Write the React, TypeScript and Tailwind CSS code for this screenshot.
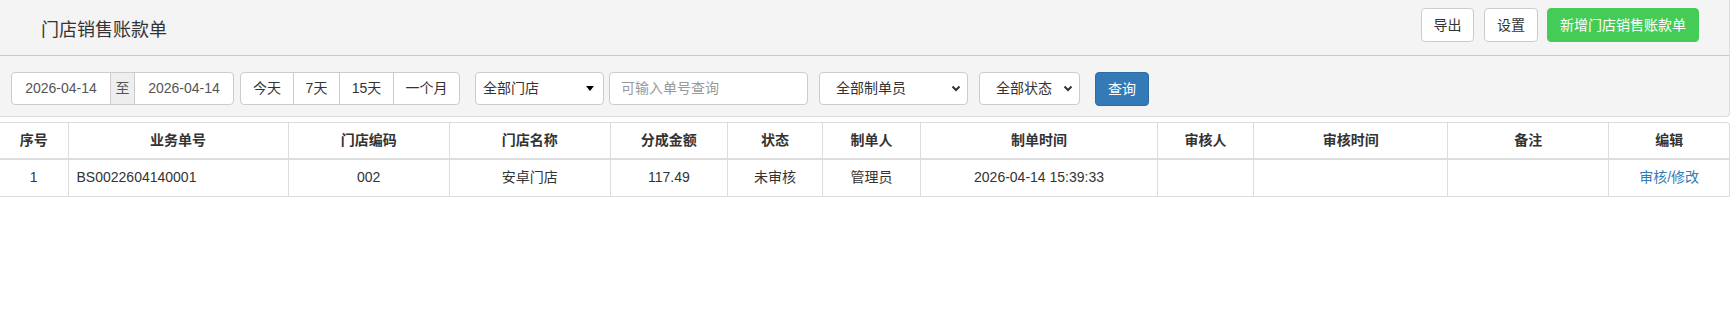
import React from "react";

const FONT = { fontFamily: '"Liberation Sans", Arial, "Noto Sans CJK SC", sans-serif' };

function Chevron() {
  return (
    <svg width="10" height="7" viewBox="0 0 10 7" className="shrink-0">
      <polyline points="1.5,1.5 5,5 8.5,1.5" fill="none" stroke="#333" strokeWidth="2" />
    </svg>
  );
}

const cols = [68, 220, 161, 161, 117, 95, 98, 237, 96, 194, 161, 120];
const heads = ["序号", "业务单号", "门店编码", "门店名称", "分成金额", "状态", "制单人", "制单时间", "审核人", "审核时间", "备注", "编辑"];

export default function App() {
  return (
    <div className="w-[1733px] h-[314px] bg-white text-[14px] text-[#333] overflow-hidden" style={FONT}>
      {/* top panel */}
      <div className="w-[1730px] bg-[#f4f4f4] border-r border-b border-[#dcdcdc] rounded-br-[4px]">
        <div className="h-[56px] border-b border-[#c8c8c8] flex items-start justify-between pl-[41px] pr-[30px]">
          <div className="mt-[19px] text-[18px] leading-[22px] text-[#333]">门店销售账款单</div>
          <div className="flex items-center mt-[8px]">
            <button className="h-[34px] w-[53px] bg-white border border-[#ccc] rounded-[4px] text-[14px] text-[#333]">导出</button>
            <button className="h-[34px] w-[54px] ml-[10px] bg-white border border-[#ccc] rounded-[4px] text-[14px] text-[#333]">设置</button>
            <button className="h-[34px] w-[152px] ml-[9px] bg-[#45cc56] border border-[#45cc56] rounded-[4px] text-[14px] text-white">新增门店销售账款单</button>
          </div>
        </div>
        <div className="h-[60px] flex items-start pt-[16px] pl-[11px]">
          {/* date range */}
          <div className="flex h-[33px] w-[223px] border border-[#ccc] rounded-[4px] bg-white overflow-hidden text-[#555]">
            <div className="w-[98px] flex items-center justify-center">2026-04-14</div>
            <div className="w-[25px] flex items-center justify-center bg-[#eee] border-l border-r border-[#ccc]">至</div>
            <div className="flex-1 flex items-center justify-center">2026-04-14</div>
          </div>
          {/* quick range */}
          <div className="ml-[6px] flex h-[33px] border border-[#ccc] rounded-[4px] bg-white overflow-hidden text-[#333]">
            <div className="w-[52px] flex items-center justify-center">今天</div>
            <div className="w-[46px] flex items-center justify-center border-l border-[#ccc]">7天</div>
            <div className="w-[54px] flex items-center justify-center border-l border-[#ccc]">15天</div>
            <div className="w-[66px] flex items-center justify-center border-l border-[#ccc]">一个月</div>
          </div>
          {/* store select */}
          <div className="ml-[15px] w-[129px] h-[33px] border border-[#ccc] rounded-[4px] bg-white flex items-center justify-between pl-[7px] pr-[9px] text-[#333]">
            <span>全部门店</span>
            <span className="w-0 h-0 border-l-[4px] border-r-[4px] border-t-[5px] border-l-transparent border-r-transparent border-t-black" />
          </div>
          {/* input */}
          <div className="ml-[5px] w-[199px] h-[33px] border border-[#ccc] rounded-[4px] bg-white flex items-center pl-[11px] text-[#999]">
            可输入单号查询
          </div>
          {/* maker select */}
          <div className="ml-[11px] w-[149px] h-[33px] border border-[#ccc] rounded-[4px] bg-white flex items-center justify-between pl-[16px] pr-[6px] text-[#333]">
            <span>全部制单员</span>
            <Chevron />
          </div>
          {/* status select */}
          <div className="ml-[11px] w-[101px] h-[33px] border border-[#ccc] rounded-[4px] bg-white flex items-center justify-between pl-[16px] pr-[6px] text-[#333]">
            <span>全部状态</span>
            <Chevron />
          </div>
          <button className="ml-[15px] w-[54px] h-[34px] bg-[#337ab7] border border-[#2e6da4] rounded-[4px] text-white text-[14px]">查询</button>
        </div>
      </div>

      {/* table */}
      <div className="mt-[5px] w-[1730px] border-t border-r border-[#ddd] rounded-tr-[4px]">
        <table className="w-full border-collapse table-fixed">
          <colgroup>
            {cols.map((w, i) => (
              <col key={i} style={{ width: w }} />
            ))}
          </colgroup>
          <thead>
            <tr>
              {heads.map((h, i) => (
                <th
                  key={h}
                  className={`h-[36px] p-0 text-center font-bold text-[14px] text-[#333] border-b-2 border-[#ddd] ${i === 0 ? "" : "border-l"}`}
                >
                  {h}
                </th>
              ))}
            </tr>
          </thead>
          <tbody>
            <tr className="text-[#333]">
              <td className="h-[37px] p-0 text-center border-b border-[#ddd]">1</td>
              <td className="p-0 pl-[8px] text-left border-b border-l border-[#ddd]">BS0022604140001</td>
              <td className="p-0 text-center border-b border-l border-[#ddd]">002</td>
              <td className="p-0 text-center border-b border-l border-[#ddd]">安卓门店</td>
              <td className="p-0 text-center border-b border-l border-[#ddd]">117.49</td>
              <td className="p-0 text-center border-b border-l border-[#ddd]">未审核</td>
              <td className="p-0 text-center border-b border-l border-[#ddd]">管理员</td>
              <td className="p-0 text-center border-b border-l border-[#ddd]">2026-04-14 15:39:33</td>
              <td className="p-0 text-center border-b border-l border-[#ddd]"></td>
              <td className="p-0 text-center border-b border-l border-[#ddd]"></td>
              <td className="p-0 text-center border-b border-l border-[#ddd]"></td>
              <td className="p-0 text-center border-b border-l border-[#ddd]">
                <span className="text-[#337ab7]">审核/修改</span>
              </td>
            </tr>
          </tbody>
        </table>
      </div>
    </div>
  );
}
